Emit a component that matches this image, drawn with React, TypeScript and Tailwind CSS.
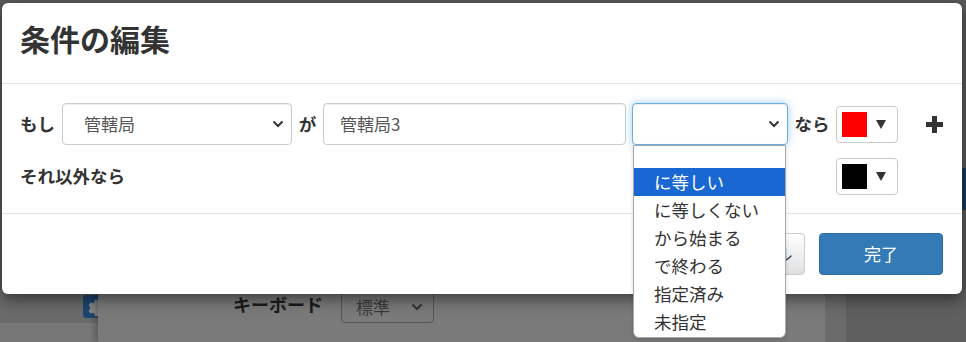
import React from "react";

const Chevron = () => (
  <svg width="12" height="8" viewBox="0 0 12 8" className="shrink-0">
    <polyline points="1.5,1.5 6,6 10.5,1.5" fill="none" stroke="#333" strokeWidth="2" />
  </svg>
);

const Tri = () => (
  <svg width="10" height="9" viewBox="0 0 10 9" className="shrink-0">
    <polygon points="0,0 10,0 5,9" fill="#333" />
  </svg>
);

const ColorButton = ({ color }: { color: string }) => (
  <div className="flex h-[37px] w-[62px] shrink-0 items-center rounded-[4px] border border-[#ccc] bg-white pl-[5px]">
    <div className={`h-[25px] w-[25px] ${color}`} />
    <div className="ml-[9px]">
      <Tri />
    </div>
  </div>
);

export default function App() {
  const items = ["に等しい", "に等しくない", "から始まる", "で終わる", "指定済み", "未指定"];
  return (
    <div className="relative h-[342px] w-[966px] overflow-hidden bg-[#5c5c5c] font-['Noto_Sans_CJK_JP','Liberation_Sans',sans-serif]">
      {/* background page (dimmed) */}
      <div className="flex h-full flex-col">
        <div className="h-[290px] bg-[#5a5a5a]" />
        <div className="flex flex-1">
          <div className="flex w-[98px] flex-col">
            <div className="flex h-[33px] items-start justify-end bg-[#6a6a6a] pt-[5px]">
              <div className="flex h-[23px] w-[15px] items-center justify-start overflow-hidden rounded-l-[3px] bg-[#1d4670]">
                <svg width="22" height="22" viewBox="0 0 24 24" className="ml-[1px] shrink-0">
                  <path
                    d="M12 8.5a3.5 3.5 0 1 0 0 7 3.5 3.5 0 0 0 0-7zm8.5 3.5l2-1.5-2-3.5-2.4.9a7 7 0 0 0-1.9-1.1L15.8 4h-4l-.4 2.8a7 7 0 0 0-1.9 1.1L7 7l-2 3.5 2 1.5a7 7 0 0 0 0 2.2L5 15.7 7 19.2l2.5-.9a7 7 0 0 0 1.9 1.1l.4 2.6h4l.4-2.6a7 7 0 0 0 1.9-1.1l2.4.9 2-3.5-2-1.5a7 7 0 0 0 0-2.2z"
                    fill="#8a8a8a"
                  />
                </svg>
              </div>
            </div>
            <div className="flex-1 bg-[#777]" />
          </div>
          <div className="flex w-[727px] items-start gap-[18px] bg-[#7a7a7a] pl-[135px] pt-[1px] shadow-[-3px_0_6px_rgba(0,0,0,0.25)]">
            <span className="text-[18px] font-bold leading-[26px] text-[#1c1c1c]">キーボード</span>
            <div className="flex h-[32px] w-[93px] items-center justify-between rounded-[4px] border border-[#555] pl-[14px] pr-[10px] text-[17px] text-[#3a3a3a]">
              <span>標準</span>
              <Chevron />
            </div>
          </div>
          <div className="w-[21px] bg-[#6b6b6b]" />
          <div className="flex-1 bg-[#5f5f5f]" />
        </div>
      </div>
      <div className="absolute right-0 top-[168px] h-[42px] w-[4px] bg-[#173a5e]" />

      {/* modal */}
      <div className="absolute left-[2px] top-[3px] flex h-[291px] w-[960px] flex-col rounded-[6px] bg-white shadow-[0_5px_15px_rgba(0,0,0,0.5)]">
        <div className="h-[81px] shrink-0 border-b border-[#e5e5e5] pl-[18px] pt-[15px]">
          <h1 className="text-[30px] font-bold leading-[40px] text-[#333]">条件の編集</h1>
        </div>
        <div className="shrink-0 border-b border-[#e5e5e5] pb-[18px] pl-[18px] pt-[19px]">
          <div className="flex h-[42px] items-center text-[#333]">
            <span className="w-[42px] text-[17.5px] font-bold">もし</span>
            <div className="flex h-[42px] w-[230px] items-center justify-between rounded-[4px] border border-[#ccc] bg-white pl-[21px] pr-[7px] text-[17px] text-[#555] shadow-[inset_0_1px_1px_rgba(0,0,0,0.075)]">
              <span>管轄局</span>
              <Chevron />
            </div>
            <span className="w-[31px] text-center text-[17.5px] font-bold">が</span>
            <div className="flex h-[42px] w-[303px] items-center rounded-[4px] border border-[#ccc] bg-white pl-[16px] text-[17px] text-[#555] shadow-[inset_0_1px_1px_rgba(0,0,0,0.075)]">
              管轄局3
            </div>
            <div className="ml-[6px] flex h-[42px] w-[156px] items-center justify-end rounded-[4px] border border-[#66afe9] bg-white pr-[7px] shadow-[inset_0_1px_1px_rgba(0,0,0,0.075),0_0_8px_rgba(102,175,233,0.6)]">
              <Chevron />
            </div>
            <span className="w-[48px] text-center text-[17.5px] font-bold">なら</span>
            <ColorButton color="bg-[#ff0000]" />
            <svg width="17" height="17" viewBox="0 0 17 17" className="ml-[28px] shrink-0">
              <rect x="6" y="0" width="5" height="17" fill="#333" />
              <rect x="0" y="6" width="17" height="5" fill="#333" />
            </svg>
          </div>
          <div className="mt-[13px] flex h-[37px] items-center text-[#333]">
            <span className="w-[816px] text-[17.5px] font-bold">それ以外なら</span>
            <ColorButton color="bg-black" />
          </div>
        </div>
        <div className="flex flex-1 items-start justify-end gap-[14px] pr-[19px] pt-[19px]">
          <button className="h-[42px] w-[110px] rounded-[4px] border border-[#ccc] bg-gradient-to-b from-white to-[#e0e0e0] text-[17px] text-[#333]">
            キャンセル
          </button>
          <button className="h-[42px] w-[124px] rounded-[4px] border border-[#2e6da4] bg-[#337ab7] text-[17px] text-white">
            完了
          </button>
        </div>
      </div>

      {/* open dropdown list */}
      <div className="absolute left-[633px] top-[145px] flex w-[153px] flex-col rounded-b-[6px] border border-[#a8a8a8] bg-white pb-[1px] shadow-[0_2px_4px_rgba(0,0,0,0.15)]">
        <div className="h-[22px]" />
        {items.map((t, i) => (
          <div
            key={t}
            className={
              i === 0
                ? "h-[28px] bg-[#1967d2] pl-[20px] text-[17.5px] leading-[28px] text-white"
                : "h-[28px] pl-[20px] text-[17.5px] leading-[28px] text-[#333]"
            }
          >
            {t}
          </div>
        ))}
      </div>
    </div>
  );
}
